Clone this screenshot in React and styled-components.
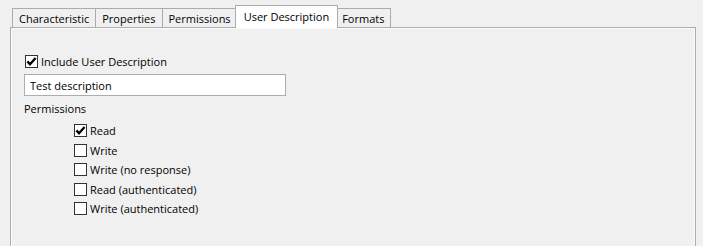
import React from 'react'
import styled, { createGlobalStyle } from 'styled-components'

const GlobalStyle = createGlobalStyle`
  html, body {
    margin: 0;
    padding: 0;
    background: #f0f0f0;
  }
  body {
    font-family: "Open Sans", "Segoe UI", sans-serif;
    font-size: 11px;
    color: #000;
  }
`

const tabs = ['Characteristic', 'Properties', 'Permissions', 'User Description', 'Formats']

const permissions = [
  { label: 'Read', checked: true },
  { label: 'Write', checked: false },
  { label: 'Write (no response)', checked: false },
  { label: 'Read (authenticated)', checked: false },
  { label: 'Write (authenticated)', checked: false },
]

const CheckBox = ({ checked }) => (
  <Box>
    {checked && (
      <svg width="11" height="11" viewBox="0 0 11 11">
        <path d="M1.4 5.4 L4 8.2 L9.6 2" fill="none" stroke="#000" strokeWidth="2.3" />
      </svg>
    )}
  </Box>
)

export default function App() {
  return (
    <>
      <GlobalStyle />
      <Page>
        <TabStrip>
          {tabs.map((t) => (
            <Tab key={t} $active={t === 'User Description'}>{t}</Tab>
          ))}
        </TabStrip>
        <Panel>
          <CheckRow>
            <CheckBox checked />
            <span>Include User Description</span>
          </CheckRow>
          <TextField defaultValue="Test description" />
          <Label>Permissions</Label>
          <PermList>
            {permissions.map((p) => (
              <PermRow key={p.label}>
                <CheckBox checked={p.checked} />
                <span>{p.label}</span>
              </PermRow>
            ))}
          </PermList>
        </Panel>
      </Page>
    </>
  )
}

const Page = styled.div`
  padding: 5px 7px 0 10px;
  height: 246px;
  box-sizing: border-box;
  overflow: hidden;
`

const TabStrip = styled.div`
  display: flex;
  align-items: flex-end;
  height: 23px;
  margin-left: 2px;
  margin-bottom: -1px;
  position: relative;
  z-index: 1;
`

const Tab = styled.div`
  display: flex;
  align-items: center;
  box-sizing: border-box;
  height: ${(p) => (p.$active ? '23px' : '20px')};
  padding: ${(p) => (p.$active ? '0 8px 2px' : '0 6px')};
  margin: ${(p) => (p.$active ? '0 -2px 0 -3px' : '0 0 0 -1px')};
  border: 1px solid #acacac;
  border-bottom: ${(p) => (p.$active ? 'none' : '1px solid #acacac')};
  background: ${(p) => (p.$active ? '#fff' : '#f0f0f0')};
  position: relative;
  z-index: ${(p) => (p.$active ? 2 : 1)};
  white-space: nowrap;

  &:first-child {
    margin-left: 0;
  }
`

const Panel = styled.div`
  border: 1px solid #acacac;
  box-shadow: inset 0 0 0 1px #fbfbfb;
  background: #f0f0f0;
  height: 240px;
  padding: 24px 13px 0;
  box-sizing: border-box;
`

const Row = styled.div`
  display: flex;
  align-items: center;
  gap: 3px;
  white-space: nowrap;
`

const CheckRow = styled(Row)`
  height: 19px;
  margin-left: 1px;
`

const Box = styled.div`
  width: 13px;
  height: 13px;
  box-sizing: border-box;
  border: 1px solid #333;
  background: #fff;
  display: flex;
  align-items: center;
  justify-content: center;
  flex: none;
`

const TextField = styled.input`
  display: block;
  width: 262px;
  height: 22px;
  margin-top: 3px;
  box-sizing: border-box;
  border: 1px solid #abadb3;
  background: #fff;
  padding: 0 5px;
  font: inherit;
  color: #000;
  outline: none;
`

const Label = styled.div`
  height: 19px;
  margin-top: 3px;
  display: flex;
  align-items: center;
`

const PermList = styled.div`
  margin-top: 3px;
  padding-left: 50px;
  display: flex;
  flex-direction: column;
`

const PermRow = styled(Row)`
  height: 19.5px;
`
